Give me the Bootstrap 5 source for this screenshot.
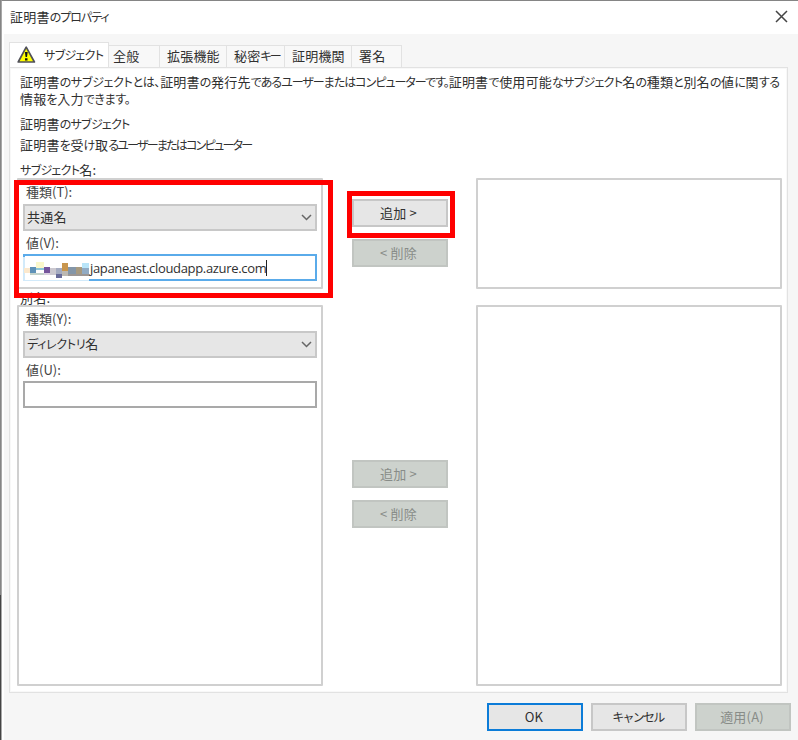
<!DOCTYPE html>
<html lang="ja">
<head>
<meta charset="utf-8">
<meta name="viewport" content="width=device-width, initial-scale=1">
<title>証明書のプロパティ</title>
<link href="https://cdn.jsdelivr.net/npm/bootstrap@5.3.0/dist/css/bootstrap.min.css" rel="stylesheet">
<style>
body{width:798px;height:740px;overflow:hidden;background:linear-gradient(#858585 595px,#444 595px);color:#303030;font:13px/17px "Noto Sans CJK JP","Open Sans",sans-serif;font-feature-settings:"palt";letter-spacing:.2px;white-space:nowrap}
i{font-style:normal;font-size:12px;letter-spacing:-.3px}
i.kata{letter-spacing:-.7px}
i.wide{letter-spacing:-1px}
i.long{letter-spacing:-1.75px}
.dialog{height:740px;border-top:1px solid #858585;margin-left:1px;background:#f6f6f6;border-left:1px solid #a8a8a8;box-shadow:inset 2px 0 #fff}
.titlebar{height:33px;padding:0 10px 2px 8px}
.titlebar svg{width:13px;height:13px}
.tabstrip{height:33px;padding:8px 0 0 7px}
.tab{height:22px;border:1px solid #e2e2e2;border-left:0;border-bottom:0;background:#f8f8f8;line-height:20px;padding-left:7px}
.tab-on{height:25px;width:100px;background:#fff;border-left:1px solid #e2e2e2;padding-left:7px}
.tab-on svg{width:19px;height:18px}
.w50x{width:50px}.w51x{width:51px}.w67x{width:67px}.w58x{width:58px}
.panel{width:779px;height:626px;margin-left:7px;border:1px solid #e2e2e2;box-shadow:inset 0 0 0 1px #f8f8f8;background:#fff;padding:5px 5px 0 7px}
.intro{height:105px;padding:1px 0 0 3px;line-height:16px}
.intro .next{margin-top:1px}
.intro .head{margin-top:9px}
.intro .sub{margin-top:5px}
.intro .name{margin-top:9px}
.gbox{border:2px solid #d0d0d0;border-radius:1px;background:#fff}
.gleft{width:306px;padding:4px 4px 0}
.gright{width:306px}
.h-top{height:111px}.h-low{height:381px}
.caption{height:16px;padding-left:3px;line-height:17px}
.field-label{height:20px;padding-left:3px;line-height:16px;color:#444;letter-spacing:0}
.field-label.second{height:23px;line-height:23px}
.combo,.entry{width:294px;height:27px;border:2px solid #c8c8c8;line-height:22px;padding:0 3px 1px 2px}
.combo{background:#e6e6e6}
.combo svg{width:11px;height:7px;margin-top:1px}
.entry{background:#fff;border-color:#a9a9a9}
.entry-focus{border-color:#5aabea;padding:0}
.host{font-family:"Open Sans","Noto Sans",sans-serif;font-size:13px;letter-spacing:-.33px;line-height:20px}
.caret{width:1px;height:16px;background:#222}
.mosaic{width:67px;height:27px;margin:-2px 0 -2px -2px;flex:none}
.dbtn{width:96px;height:28px;border:2px solid #c7c7c7;background:#e6e6e6;border-radius:0;padding:0 2px 1px 0;line-height:20px;font-size:13px;color:#303030;letter-spacing:.2px}
.dbtn:disabled{opacity:1;background:#cdd2cd;border-color:#c1c5c1;color:#888c88}
.dbtn-main{border-color:#0c7cd8}
.mark-red{border:5px solid #f00;pointer-events:none}
.mark-a{left:14px;top:180px;width:319px;height:118px}
.mark-b{left:347px;top:191px;width:108px;height:47px}
.mid-top{padding-top:21px;gap:12px}
.mid-low{padding-top:155px;gap:12px}
.footer-row{gap:8px;padding:10px 7px 0 0}
</style>
<script src="https://cdn.jsdelivr.net/npm/bootstrap@5.3.0/dist/js/bootstrap.bundle.min.js"></script>
</head>
<body class="position-relative">
<div class="dialog">
  <header class="titlebar d-flex align-items-center justify-content-between bg-white">
    <span>証明書<i class="wide">のプロパティ</i></span>
    <svg viewBox="0 0 13 13" fill="none" stroke="#444" stroke-width="1.5"><path d="M1 1l11 11M12 1L1 12"/></svg>
  </header>
  <nav class="tabstrip d-flex align-items-end">
    <div class="tab tab-on d-flex align-items-center">
      <svg viewBox="0 0 19 18"><path d="M9.2 1.2L1.2 16h16.2z" fill="#ff0" stroke="#505058" stroke-width="1.7" stroke-linejoin="round"/><path d="M7.9 6h2.8l-.7 5H8.6zM8 12.2h2.5v2.2H8z" fill="#111"/></svg>
      <i class="kata ms-2">サブジェクト</i>
    </div>
    <div class="tab w51x ps-1">全般</div>
    <div class="tab w67x">拡張機能</div>
    <div class="tab w58x">秘密<i class="long">キー</i></div>
    <div class="tab w67x">証明機関</div>
    <div class="tab w50x">署名</div>
  </nav>
  <main class="panel">
    <div class="intro">
      <div>証明書<i>のサブジェクトとは、</i>証明書<i>の</i>発行先<i class="wide">であるユーザーまたはコンピューターです。</i>証明書<i>で</i>使用可能<i class="kata">なサブジェクト</i>名<i>の</i>種類<i>と</i>別名<i>の</i>値<i>に</i>関<i>する</i></div>
      <div class="next">情報<i>を</i>入力<i>できます。</i></div>
      <div class="head">証明書<i class="kata">のサブジェクト</i></div>
      <div class="sub">証明書<i>を</i>受<i>け</i>取<i class="long">るユーザーまたはコンピューター</i></div>
      <div class="name"><i class="kata">サブジェクト</i>名:</div>
    </div>
    <div class="d-flex justify-content-between">
      <section class="gbox gleft h-top">
        <div class="field-label">種類(T):</div>
        <div class="combo d-flex align-items-center justify-content-between"><span>共通名</span><svg viewBox="0 0 11 7" fill="none" stroke="#666" stroke-width="1.5"><path d="M1 1l4.5 4.5L10 1"/></svg></div>
        <div class="field-label second">値(V):</div>
        <div class="entry entry-focus d-flex align-items-center">
          <svg class="mosaic" viewBox="0 0 67 27" shape-rendering="crispEdges">
            <path d="M0 3h2v22H0zM0 25h66v2H0z" fill="#d2eafa"/><path d="M2 25h64v1H2z" fill="#fff"/>
            <path d="M1 14h6v5H1z" fill="#fbe8cd"/><path d="M7 13h6v6H7z" fill="#5f92b8"/>
            <path d="M13 8h8v6h-8z" fill="#fbf8cb"/><path d="M13 14h8v2h-8z" fill="#8ec4d6"/><path d="M7 19h14v2H7z" fill="#c4d3cb"/>
            <path d="M21 13h6v6h-6z" fill="#75559c"/><path d="M21 19h6v2h-6z" fill="#d9cfe0"/><path d="M27 14h6v7h-6z" fill="#cbc8cf"/><path d="M33 14h6v7h-6z" fill="#a4abc0"/><path d="M33 20h6v4h-6z" fill="#686b98"/>
            <path d="M39 9h6v9h-6z" fill="#c8964e"/><path d="M39 17h6v5h-6z" fill="#bcb8b2"/><path d="M45 13h8v7h-8z" fill="#8496a8"/><path d="M53 13h6v8h-6z" fill="#a79a80"/><path d="M45 20h22v2H45z" fill="#9b9694"/>
            <path d="M59 9h7v5h-7z" fill="#b9e5f9"/><path d="M59 14h7v6h-7z" fill="#91abc4"/>
          </svg><span class="host">japaneast.cloudapp.azure.com</span><span class="caret"></span></div>
      </section>
      <div class="mid-top d-flex flex-column">
        <button class="btn dbtn">追加 &gt;</button>
        <button class="btn dbtn" disabled>&lt; 削除</button>
      </div>
      <section class="gbox gright h-top"></section>
    </div>
    <div class="caption">別名:</div>
    <div class="d-flex justify-content-between">
      <section class="gbox gleft h-low">
        <div class="field-label">種類(Y):</div>
        <div class="combo d-flex align-items-center justify-content-between"><span><i>ディレクトリ</i>名</span><svg viewBox="0 0 11 7" fill="none" stroke="#666" stroke-width="1.5"><path d="M1 1l4.5 4.5L10 1"/></svg></div>
        <div class="field-label second">値(U):</div>
        <div class="entry"></div>
      </section>
      <div class="mid-low d-flex flex-column">
        <button class="btn dbtn" disabled>追加 &gt;</button>
        <button class="btn dbtn" disabled>&lt; 削除</button>
      </div>
      <section class="gbox gright h-low"></section>
    </div>
  </main>
  <footer class="footer-row d-flex justify-content-end">
    <button class="btn dbtn dbtn-main">OK</button>
    <button class="btn dbtn"><i class="long">キャンセル</i></button>
    <button class="btn dbtn" disabled>適用(A)</button>
  </footer>
</div>
<div class="mark-red mark-a position-absolute"></div>
<div class="mark-red mark-b position-absolute"></div>
</body>
</html>
